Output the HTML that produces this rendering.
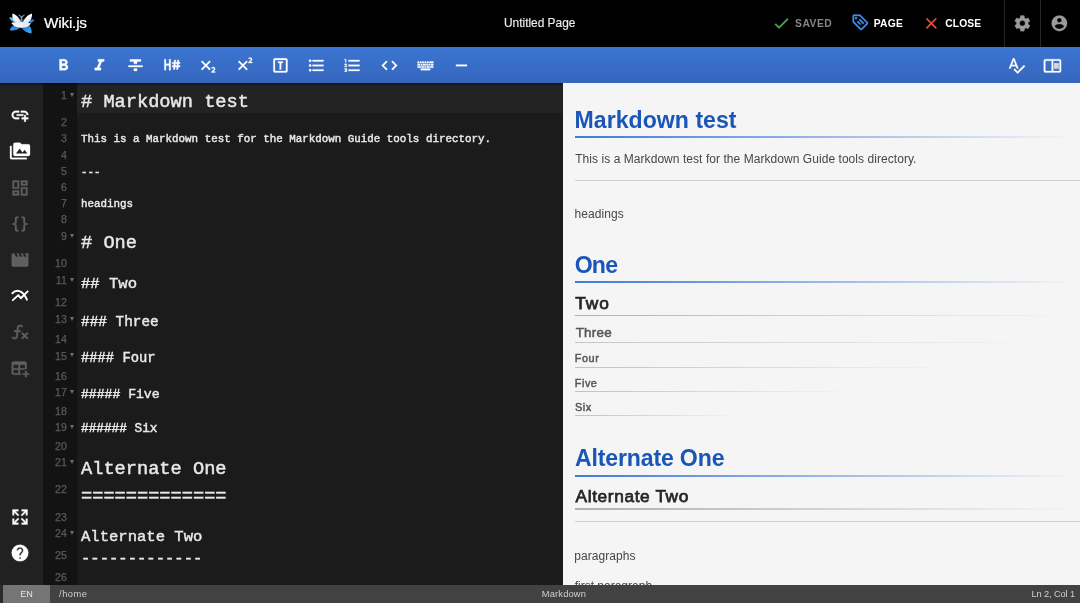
<!DOCTYPE html>
<html lang="en"><head><meta charset="utf-8"><title>Untitled Page - Wiki.js</title>
<style>
*{box-sizing:border-box;margin:0;padding:0}
html,body{width:1080px;height:603px;overflow:hidden;background:#000}
body{position:relative;font-family:"Liberation Sans",sans-serif;-webkit-font-smoothing:antialiased}
.abs{position:absolute}
.ic{position:absolute;display:block;overflow:visible}
.t{position:absolute;white-space:pre;line-height:1}
#wrap{position:absolute;left:0;top:0;width:1080px;height:603px;will-change:transform}
#topbar{left:0;top:0;width:1080px;height:47px;background:#000}
#toolbar{left:0;top:47px;width:1080px;height:36.4px;background:linear-gradient(to bottom,#3b75d1 0%,#3566be 100%)}
#sidebar{left:0;top:83.4px;width:43px;height:501.2px;background:#212121}
#gutter{left:43px;top:83.4px;width:34px;height:501.2px;background:#131313}
#editor{left:77px;top:83.4px;width:485.5px;height:501.2px;background:#1b1b1b}
#active{left:77px;top:83.4px;width:485.5px;height:29.7px;background:#232323}
#preview{left:562.5px;top:83.4px;width:517.5px;height:501.2px;background:#f5f5f5;overflow:hidden}
#status{left:0;top:584.6px;width:1080px;height:18.4px;background:#424242}
#shadow{left:0;top:83.4px;width:562.5px;height:3px;background:linear-gradient(to bottom,rgba(0,0,0,.45),rgba(0,0,0,0))}
.ln{position:absolute;left:43px;width:23.8px;text-align:right;font-family:"Liberation Sans",sans-serif;font-size:10.6px;color:#5a5a5a;line-height:16.2px;height:16.2px;-webkit-text-stroke:.25px #5a5a5a}
.fold{position:absolute;left:70.15px;width:0;height:0;border-left:2.9px solid transparent;border-right:2.9px solid transparent;border-top:4.9px solid #6e6e6e}
.cl{position:absolute;left:81px;white-space:pre;font-family:"Liberation Mono",monospace;color:#e8e8e8;line-height:1;-webkit-text-stroke:.45px #e8e8e8}
.pv{position:absolute;left:12.2px;white-space:pre;line-height:1}
.ul{position:absolute;left:12.5px;height:1.5px}
</style></head><body><div id="wrap">

<div class="abs" id="topbar"></div>
<div class="abs" id="toolbar"></div>
<div class="abs" id="sidebar"></div>
<div class="abs" id="gutter"></div>
<div class="abs" id="editor"></div>
<div class="abs" id="active"></div>
<div class="abs" id="status"></div>
<svg class="ic" style="left:8.5px;top:12.5px;width:26px;height:21px" viewBox="0 0 26 21">
<defs>
<linearGradient id="lgw" x1="0" y1="0" x2="0" y2="1"><stop offset="0" stop-color="#ffffff"/><stop offset="1" stop-color="#dfe4ee"/></linearGradient>
<linearGradient id="lgl" x1="1" y1="0" x2="0" y2="1"><stop offset="0" stop-color="#1f66c8"/><stop offset="1" stop-color="#3f9ff0"/></linearGradient>
<linearGradient id="lgr" x1="0" y1="0" x2="1" y2="1"><stop offset="0" stop-color="#1f66c8"/><stop offset="1" stop-color="#49aef4"/></linearGradient>
</defs>
<path d="M0.1,4.5 C2,3.7 4.4,4.5 5.8,6.2 L5.4,9.2 C3,8.4 1,6.8 0.1,4.5Z" fill="#46bdf5"/>
<path d="M25.5,6.8 C24,6.1 22.2,6.5 21,7.6 L21,10.4 C23,9.9 24.6,8.6 25.5,6.8Z" fill="#2f86de"/>
<path d="M0.7,17.3 C1.6,14.6 3.4,12.8 4.8,12.4 C7,13.4 9.6,14.1 11.8,14.2 C9.6,16.6 5,18.1 0.7,17.3Z" fill="url(#lgl)"/>
<path d="M22.5,20.4 C23,17 21.9,13.9 20.4,12.4 C18,13.7 15,14.5 12.4,14.6 C14.4,17.8 18.4,20.2 22.5,20.4Z" fill="url(#lgr)"/>
<path d="M10.2,5.4 L11.4,8.8 L13.8,8.8 L14.9,5.6 L12.5,7.2Z" fill="#1450a8"/>
<path d="M3.4,0.5 C7.6,1.6 11.8,6 12.9,12.8 C7.4,12.2 2.6,8 3.4,0.5Z" fill="url(#lgw)"/>
<path d="M23,0.5 C18.6,1.8 13.8,6.6 12.5,13 C18.2,12.2 23.6,7.6 23,0.5Z" fill="url(#lgw)"/>
<path d="M2.3,9.7 C5,8.3 10.2,9.4 12.8,14.6 C8.4,15 3.9,13.1 2.3,9.7Z" fill="#eef1f7"/>
<path d="M21.9,10.2 C19,8.9 14.6,9.9 12.2,14.8 C16.5,15.1 20.5,13.3 21.9,10.2Z" fill="#e6eaf2"/>
<ellipse cx="12.6" cy="11.6" rx="1.6" ry="3.2" fill="#eef1f7"/>
<path d="M10.1,2.1 L12.5,4.2 L15.1,2.1" fill="none" stroke="#8e949b" stroke-width="1.1" stroke-linecap="round" stroke-linejoin="round"/>
<path d="M12.5,4.2 L12.5,7.4" stroke="#8e949b" stroke-width="1.5" stroke-linecap="round"/>
</svg>
<div class="t" id="brand" style="left:44.0px;top:14.7px;font-size:15.3px;letter-spacing:-.2px;color:#fff;-webkit-text-stroke:.2px #fff">Wiki.js</div>
<div class="t" id="title" style="left:504.0px;top:18.2px;font-size:11.9px;color:#ececec;-webkit-text-stroke:.15px #ececec">Untitled Page</div>
<svg class="ic" style="left:772.05px;top:13.85px;width:18.70px;height:18.70px" viewBox="0 0 24 24"><path d="M21,7L9,19L3.5,13.5L4.91,12.09L9,16.17L19.59,5.59L21,7Z" fill="#4ea94f" stroke="#4ea94f" stroke-width=".35" stroke-linejoin="round"/></svg>
<div class="t tb" id="saved" style="left:795.0px;top:19.2px;font-size:10.3px;font-weight:bold;letter-spacing:.52px;color:#858585">SAVED</div>
<svg class="ic" style="left:850.65px;top:13.45px;width:18.70px;height:18.70px" viewBox="0 0 24 24"><path d="M21.4,11.6L12.4,2.6C12,2.2 11.5,2 11,2H4C2.9,2 2,2.9 2,4V11C2,11.5 2.2,12 2.6,12.4L11.6,21.4C12,21.8 12.5,22 13,22C13.5,22 14,21.8 14.4,21.4L21.4,14.4C21.8,14 22,13.5 22,13C22,12.5 21.8,12 21.4,11.6M13,20L4,11V4H11L20,13M6.5,5A1.5,1.5 0 0,1 8,6.5A1.5,1.5 0 0,1 6.5,8A1.5,1.5 0 0,1 5,6.5A1.5,1.5 0 0,1 6.5,5M10.1,8.9L11.5,7.5L17,13L15.6,14.4L10.1,8.9M7.6,11.4L9,10L13,14L11.6,15.4L7.6,11.4Z" fill="#3d8df0" stroke="#3d8df0" stroke-width=".35" stroke-linejoin="round"/></svg>
<div class="t tb" id="page" style="left:873.7px;top:19.2px;font-size:10.3px;font-weight:bold;letter-spacing:.24px;color:#fff">PAGE</div>
<svg class="ic" style="left:922.05px;top:13.85px;width:18.70px;height:18.70px" viewBox="0 0 24 24"><path d="M19,6.41L17.59,5L12,10.59L6.41,5L5,6.41L10.59,12L5,17.59L6.41,19L12,13.41L17.59,19L19,17.59L13.41,12L19,6.41Z" fill="#e8493a" stroke="#e8493a" stroke-width=".35" stroke-linejoin="round"/></svg>
<div class="t tb" id="close" style="left:945.3px;top:19.2px;font-size:10.3px;font-weight:bold;letter-spacing:.1px;color:#fff">CLOSE</div>
<div class="abs" style="left:1003.6px;top:0;width:1px;height:47px;background:#262626"></div>
<div class="abs" style="left:1039.9px;top:0;width:1px;height:47px;background:#262626"></div>
<svg class="ic" style="left:1012.55px;top:13.55px;width:18.70px;height:18.70px" viewBox="0 0 24 24"><path d="M12,15.5A3.5,3.5 0 0,1 8.5,12A3.5,3.5 0 0,1 12,8.5A3.5,3.5 0 0,1 15.5,12A3.5,3.5 0 0,1 12,15.5M19.43,12.97C19.47,12.65 19.5,12.33 19.5,12C19.5,11.67 19.47,11.34 19.43,11L21.54,9.37C21.73,9.22 21.78,8.95 21.66,8.73L19.66,5.27C19.54,5.05 19.27,4.96 19.05,5.05L16.56,6.05C16.04,5.66 15.5,5.32 14.87,5.07L14.5,2.42C14.46,2.18 14.25,2 14,2H10C9.75,2 9.54,2.18 9.5,2.42L9.13,5.07C8.5,5.32 7.96,5.66 7.44,6.05L4.95,5.05C4.73,4.96 4.46,5.05 4.34,5.27L2.34,8.73C2.21,8.95 2.27,9.22 2.46,9.37L4.57,11C4.53,11.34 4.5,11.67 4.5,12C4.5,12.33 4.53,12.65 4.57,12.97L2.46,14.63C2.27,14.78 2.21,15.05 2.34,15.27L4.34,18.73C4.46,18.95 4.73,19.03 4.95,18.95L7.44,17.94C7.96,18.34 8.5,18.68 9.13,18.93L9.5,21.58C9.54,21.82 9.75,22 10,22H14C14.25,22 14.46,21.82 14.5,21.58L14.87,18.93C15.5,18.67 16.04,18.34 16.56,17.94L19.05,18.95C19.27,19.03 19.54,18.95 19.66,18.73L21.66,15.27C21.78,15.05 21.73,14.78 21.54,14.63L19.43,12.97Z" fill="#9a9a9a" stroke="#9a9a9a" stroke-width=".35" stroke-linejoin="round"/></svg>
<svg class="ic" style="left:1049.55px;top:13.65px;width:18.70px;height:18.70px" viewBox="0 0 24 24"><path d="M12,19.2C9.5,19.2 7.29,17.92 6,16C6.03,14 10,12.9 12,12.9C14,12.9 17.97,14 18,16C16.71,17.92 14.5,19.2 12,19.2M12,5A3,3 0 0,1 15,8A3,3 0 0,1 12,11A3,3 0 0,1 9,8A3,3 0 0,1 12,5M12,2A10,10 0 0,0 2,12A10,10 0 0,0 12,22A10,10 0 0,0 22,12C22,6.47 17.5,2 12,2Z" fill="#9a9a9a" stroke="#9a9a9a" stroke-width=".35" stroke-linejoin="round"/></svg>
<svg class="ic" style="left:53.55px;top:55.65px;width:18.90px;height:18.90px" viewBox="0 0 24 24"><path d="M13.5,15.5H10V12.5H13.5A1.5,1.5 0 0,1 15,14A1.5,1.5 0 0,1 13.5,15.5M10,6.5H13A1.5,1.5 0 0,1 14.5,8A1.5,1.5 0 0,1 13,9.5H10M15.6,10.79C16.57,10.11 17.25,9 17.25,8C17.25,5.74 15.5,4 13.25,4H7V18H14.04C16.14,18 17.75,16.3 17.75,14.21C17.75,12.69 16.89,11.39 15.6,10.79Z" fill="#fff" stroke="#fff" stroke-width=".35" stroke-linejoin="round"/></svg>
<svg class="ic" style="left:89.78px;top:55.65px;width:18.90px;height:18.90px" viewBox="0 0 24 24"><path d="M10,4V7H12.21L8.79,15H6V18H14V15H11.79L15.21,7H18V4H10Z" fill="#fff" stroke="#fff" stroke-width=".35" stroke-linejoin="round"/></svg>
<svg class="ic" style="left:126.01px;top:55.65px;width:18.90px;height:18.90px" viewBox="0 0 24 24"><path d="M3,14H21V12H3M5,4V7H10V10H14V7H19V4M10,19H14V16H10V19Z" fill="#fff" stroke="#fff" stroke-width=".35" stroke-linejoin="round"/></svg>
<svg class="ic" style="left:162.24px;top:55.65px;width:18.90px;height:18.90px" viewBox="0 0 24 24"><path d="M3,4H5V10H9V4H11V18H9V12H5V18H3V4M13,8H15.31L15.63,5H17.63L17.31,8H19.31L19.63,5H21.63L21.31,8H23V10H21.1L20.9,12H23V14H20.69L20.37,17H18.37L18.69,14H16.69L16.37,17H14.37L14.69,14H13V12H14.9L15.1,10H13V8M17.1,10L16.9,12H18.9L19.1,10H17.1Z" fill="#fff" stroke="#fff" stroke-width=".35" stroke-linejoin="round"/></svg>
<svg class="ic" style="left:198.47px;top:55.65px;width:18.90px;height:18.90px" viewBox="0 0 24 24"><path d="M16,7.41L11.41,12L16,16.59L14.59,18L10,13.41L5.41,18L4,16.59L8.59,12L4,7.41L5.41,6L10,10.59L14.59,6L16,7.41M21.85,21.03H16.97V20.03L17.86,19.23C18.62,18.58 19.18,18.04 19.56,17.6C19.93,17.16 20.12,16.75 20.13,16.36C20.14,16.08 20.05,15.85 19.86,15.66C19.68,15.5 19.39,15.38 19,15.38C18.69,15.38 18.42,15.44 18.16,15.56L17.5,15.94L17.05,14.77C17.32,14.56 17.64,14.38 18.03,14.24C18.42,14.1 18.85,14 19.32,14C20.1,14.04 20.7,14.25 21.1,14.66C21.5,15.07 21.72,15.59 21.72,16.23C21.71,16.79 21.53,17.31 21.18,17.78C20.84,18.25 20.42,18.7 19.91,19.14L19.27,19.66V19.68H21.85V21.03Z" fill="#fff" stroke="#fff" stroke-width=".35" stroke-linejoin="round"/></svg>
<svg class="ic" style="left:234.70px;top:55.65px;width:18.90px;height:18.90px" viewBox="0 0 24 24"><path d="M16,7.41L11.41,12L16,16.59L14.59,18L10,13.41L5.41,18L4,16.59L8.59,12L4,7.41L5.41,6L10,10.59L14.59,6L16,7.41M21.85,9H16.97V8L17.86,7.18C18.62,6.54 19.18,6 19.56,5.55C19.93,5.11 20.12,4.7 20.13,4.32C20.14,4.04 20.05,3.8 19.86,3.62C19.68,3.43 19.39,3.34 19,3.33C18.69,3.34 18.42,3.4 18.16,3.5L17.5,3.89L17.05,2.72C17.32,2.5 17.64,2.33 18.03,2.19C18.42,2.05 18.85,2 19.32,2C20.1,2 20.7,2.2 21.1,2.61C21.5,3 21.72,3.54 21.72,4.18C21.71,4.74 21.53,5.26 21.18,5.73C20.84,6.21 20.42,6.66 19.91,7.09L19.27,7.61V7.63H21.85V9Z" fill="#fff" stroke="#fff" stroke-width=".35" stroke-linejoin="round"/></svg>
<svg class="ic" style="left:270.93px;top:55.65px;width:18.90px;height:18.90px" viewBox="0 0 24 24"><path d="M9,7H15V9H13V17H11V9H9V7M5,3H19A2,2 0 0,1 21,5V19A2,2 0 0,1 19,21H5A2,2 0 0,1 3,19V5A2,2 0 0,1 5,3M5,5V19H19V5H5Z" fill="#fff" stroke="#fff" stroke-width=".35" stroke-linejoin="round"/></svg>
<svg class="ic" style="left:307.16px;top:55.65px;width:18.90px;height:18.90px" viewBox="0 0 24 24"><path d="M7,5H21V7H7V5M7,13V11H21V13H7M4,4.5A1.5,1.5 0 0,1 5.5,6A1.5,1.5 0 0,1 4,7.5A1.5,1.5 0 0,1 2.5,6A1.5,1.5 0 0,1 4,4.5M4,10.5A1.5,1.5 0 0,1 5.5,12A1.5,1.5 0 0,1 4,13.5A1.5,1.5 0 0,1 2.5,12A1.5,1.5 0 0,1 4,10.5M7,19V17H21V19H7M4,16.5A1.5,1.5 0 0,1 5.5,18A1.5,1.5 0 0,1 4,19.5A1.5,1.5 0 0,1 2.5,18A1.5,1.5 0 0,1 4,16.5Z" fill="#fff" stroke="#fff" stroke-width=".35" stroke-linejoin="round"/></svg>
<svg class="ic" style="left:343.39px;top:55.65px;width:18.90px;height:18.90px" viewBox="0 0 24 24"><path d="M7,13V11H21V13H7M7,19V17H21V19H7M7,7V5H21V7H7M3,8V5H2V4H4V8H3M2,17V16H5V20H2V19H4V18.5H3V17.5H4V17H2M4.25,10A0.75,0.75 0 0,1 5,10.75C5,10.95 4.92,11.14 4.79,11.27L3.12,13H5V14H2V13.08L4,11H2V10H4.25Z" fill="#fff" stroke="#fff" stroke-width=".35" stroke-linejoin="round"/></svg>
<svg class="ic" style="left:379.62px;top:55.65px;width:18.90px;height:18.90px" viewBox="0 0 24 24"><path d="M14.6,16.6L19.2,12L14.6,7.4L16,6L22,12L16,18L14.6,16.6M9.4,16.6L4.8,12L9.4,7.4L8,6L2,12L8,18L9.4,16.6Z" fill="#fff" stroke="#fff" stroke-width=".35" stroke-linejoin="round"/></svg>
<svg class="ic" style="left:415.85px;top:55.65px;width:18.90px;height:18.90px" viewBox="0 0 24 24"><path d="M6,16H18V18H6V16M6,13V15H2V13H6M7,15V13H10V15H7M11,15V13H13V15H11M14,15V13H17V15H14M18,15V13H22V15H18M2,10H5V12H2V10M19,12V10H22V12H19M18,12H16V10H18V12M8,12H6V10H8V12M12,12H9V10H12V12M15,12H13V10H15V12M2,9V7H4V9H2M5,9V7H7V9H5M8,9V7H10V9H8M11,9V7H13V9H11M14,9V7H16V9H14M17,9V7H22V9H17Z" fill="#fff" stroke="#fff" stroke-width=".35" stroke-linejoin="round"/></svg>
<svg class="ic" style="left:452.08px;top:55.65px;width:18.90px;height:18.90px" viewBox="0 0 24 24"><path d="M19,13H5V11H19V13Z" fill="#fff" stroke="#fff" stroke-width=".35" stroke-linejoin="round"/></svg>
<svg class="ic" style="left:1007.05px;top:56.05px;width:18.90px;height:18.90px" viewBox="0 0 24 24"><path d="M21.59,11.59L13.5,19.68L9.83,16L8.42,17.41L13.5,22.5L23,13M6.43,11L8.5,5.5L10.57,11M12.45,16H14.54L9.43,3H7.57L2.46,16H4.55L5.67,13H11.31L12.45,16Z" fill="#fff" stroke="#fff" stroke-width=".35" stroke-linejoin="round"/></svg>
<svg class="ic" style="left:1043.20px;top:55.75px;width:18.90px;height:18.90px" viewBox="0 0 24 24"><path d="M21,4H3A2,2 0 0,0 1,6V19A2,2 0 0,0 3,21H21A2,2 0 0,0 23,19V6A2,2 0 0,0 21,4M3,19V6H11V19H3M21,19H13V6H21V19M14,9.5H20V11H14V9.5M14,12H20V13.5H14V12M14,14.5H20V16H14V14.5Z" fill="#fff" stroke="#fff" stroke-width=".35" stroke-linejoin="round"/></svg>
<svg class="ic" style="left:10.10px;top:105.10px;width:20.00px;height:20.00px" viewBox="0 0 24 24"><path d="M7,7H11V9H7A3,3 0 0,0 4,12A3,3 0 0,0 7,15H11V17H7A5,5 0 0,1 2,12A5,5 0 0,1 7,7M17,7A5,5 0 0,1 22,12H20A3,3 0 0,0 17,9H13V7H17M8,11H16V13H8V11M17,12H19V15H22V17H19V20H17V17H14V15H17V12Z" fill="#fff" stroke="#fff" stroke-width=".35" stroke-linejoin="round"/></svg>
<svg class="ic" style="left:10.10px;top:141.30px;width:20.00px;height:20.00px" viewBox="0 0 24 24"><path d="M7,15L11.5,9L15,13.5L17.5,10.5L21,15M22,4H14L12,2H6A2,2 0 0,0 4,4V16A2,2 0 0,0 6,18H22A2,2 0 0,0 24,16V6A2,2 0 0,0 22,4M2,6H0V11H0V20A2,2 0 0,0 2,22H20V20H2V6Z" fill="#fff" stroke="#fff" stroke-width=".35" stroke-linejoin="round"/></svg>
<svg class="ic" style="left:10.10px;top:177.50px;width:20.00px;height:20.00px" viewBox="0 0 24 24"><path d="M19,5V7H15V5H19M9,5V11H5V5H9M19,13V19H15V13H19M9,17V19H5V17H9M21,3H13V9H21V3M11,3H3V13H11V3M21,11H13V21H21V11M11,15H3V21H11V15Z" fill="#5f5f5f" stroke="#5f5f5f" stroke-width=".35" stroke-linejoin="round"/></svg>
<svg class="ic" style="left:10.10px;top:213.70px;width:20.00px;height:20.00px" viewBox="0 0 24 24"><path d="M8,3A2,2 0 0,0 6,5V9A2,2 0 0,1 4,11H3V13H4A2,2 0 0,1 6,15V19A2,2 0 0,0 8,21H10V19H8V14A2,2 0 0,0 6,12A2,2 0 0,0 8,10V5H10V3M16,3A2,2 0 0,1 18,5V9A2,2 0 0,0 20,11H21V13H20A2,2 0 0,0 18,15V19A2,2 0 0,1 16,21H14V19H16V14A2,2 0 0,1 18,12A2,2 0 0,1 16,10V5H14V3H16Z" fill="#5f5f5f" stroke="#5f5f5f" stroke-width=".35" stroke-linejoin="round"/></svg>
<svg class="ic" style="left:10.10px;top:249.90px;width:20.00px;height:20.00px" viewBox="0 0 24 24"><path d="M18,4L20,8H17L15,4H13L15,8H12L10,4H8L10,8H7L5,4H4A2,2 0 0,0 2,6V18A2,2 0 0,0 4,20H20A2,2 0 0,0 22,18V4H18Z" fill="#5f5f5f" stroke="#5f5f5f" stroke-width=".35" stroke-linejoin="round"/></svg>
<svg class="ic" style="left:10.10px;top:286.10px;width:20.00px;height:20.00px" viewBox="0 0 24 24"><path d="M2.8,8.7 C7,4.4 15,3.4 20.3,16.4" fill="none" stroke="#fff" stroke-width="2.3" stroke-linecap="round"/><path d="M3.4,17 L10,10.9 L13,14.7 L21.2,6.5" fill="none" stroke="#fff" stroke-width="2.3" stroke-linecap="round" stroke-linejoin="round"/></svg>
<svg class="ic" style="left:10.10px;top:322.30px;width:20.00px;height:20.00px" viewBox="0 0 24 24"><path d="M12.42,5.29C11.32,5.19 10.35,6 10.25,7.11L10,10H12.82V12H9.82L9.38,17.07C9.18,19.27 7.24,20.9 5.04,20.7C3.79,20.59 2.66,19.9 2,18.83L3.5,17.33C3.83,18.38 4.96,18.97 6,18.63C6.78,18.39 7.33,17.7 7.4,16.89L7.82,12H4.82V10H8L8.27,6.93C8.46,4.73 10.39,3.1 12.6,3.28C13.86,3.39 15,4.09 15.66,5.17L14.16,6.67C13.91,5.9 13.23,5.36 12.42,5.29M22,13.65L20.59,12.24L17.76,15.07L14.93,12.24L13.5,13.65L16.35,16.5L13.5,19.31L14.93,20.72L17.76,17.89L20.59,20.72L22,19.31L19.17,16.5L22,13.65Z" fill="#5f5f5f" stroke="#5f5f5f" stroke-width=".35" stroke-linejoin="round"/></svg>
<svg class="ic" style="left:10.10px;top:358.50px;width:20.00px;height:20.00px" viewBox="0 0 24 24"><path d="M18,14H20V17H23V19H20V22H18V19H15V17H18V14M4,3H18A2,2 0 0,1 20,5V12.08C18.45,11.82 16.92,12.18 15.68,13H12V17H13.08C12.97,17.68 12.97,18.35 13.08,19H4A2,2 0 0,1 2,17V5A2,2 0 0,1 4,3M4,7V11H10V7H4M12,7V11H18V7H12M4,13V17H10V13H4Z" fill="#5f5f5f" stroke="#5f5f5f" stroke-width=".35" stroke-linejoin="round"/></svg>
<svg class="ic" style="left:10.10px;top:507.10px;width:20.00px;height:20.00px" viewBox="0 0 24 24"><path d="M9.5,13.09L10.91,14.5L6.41,19H10V21H3V14H5V17.59L9.5,13.09M10.91,9.5L9.5,10.91L5,6.41V10H3V3H10V5H6.41L10.91,9.5M14.5,13.09L19,17.59V14H21V21H14V19H17.59L13.09,14.5L14.5,13.09M13.09,9.5L17.59,5H14V3H21V10H19V6.41L14.5,10.91L13.09,9.5Z" fill="#fff" stroke="#fff" stroke-width=".35" stroke-linejoin="round"/></svg>
<svg class="ic" style="left:10.00px;top:543.20px;width:20.00px;height:20.00px" viewBox="0 0 24 24"><path d="M15.07,11.25L14.17,12.17C13.45,12.89 13,13.5 13,15H11V14.5C11,13.39 11.45,12.39 12.17,11.67L13.41,10.41C13.78,10.05 14,9.55 14,9C14,7.89 13.1,7 12,7A2,2 0 0,0 10,9H8A4,4 0 0,1 12,5A4,4 0 0,1 16,9C16,9.88 15.64,10.67 15.07,11.25M13,19H11V17H13M12,2A10,10 0 0,0 2,12A10,10 0 0,0 12,22A10,10 0 0,0 22,12C22,6.47 17.5,2 12,2Z" fill="#fff" stroke="#fff" stroke-width=".35" stroke-linejoin="round"/></svg>
<div class="abs" id="shadow"></div>
<div class="ln" style="top:87.00px">1</div>
<div class="fold" style="top:92.90px"></div>
<div class="cl" id="cl1" style="top:93.29px;font-size:18.67px"># Markdown test</div>
<div class="ln" style="top:114.30px">2</div>
<div class="ln" style="top:130.30px">3</div>
<div class="cl" id="cl3" style="top:134.18px;font-size:10.85px">This is a Markdown test for the Markdown Guide tools directory.</div>
<div class="ln" style="top:146.50px">4</div>
<div class="ln" style="top:162.70px">5</div>
<div class="cl" id="cl5" style="top:166.58px;font-size:10.85px">---</div>
<div class="ln" style="top:178.90px">6</div>
<div class="ln" style="top:195.10px">7</div>
<div class="cl" id="cl7" style="top:198.98px;font-size:10.85px">headings</div>
<div class="ln" style="top:211.40px">8</div>
<div class="ln" style="top:228.20px">9</div>
<div class="fold" style="top:234.10px"></div>
<div class="cl" id="cl9" style="top:234.19px;font-size:18.67px"># One</div>
<div class="ln" style="top:255.30px">10</div>
<div class="ln" style="top:272.00px">11</div>
<div class="fold" style="top:277.90px"></div>
<div class="cl" id="cl11" style="top:277.48px;font-size:15.55px">## Two</div>
<div class="ln" style="top:294.40px">12</div>
<div class="ln" style="top:310.60px">13</div>
<div class="fold" style="top:316.50px"></div>
<div class="cl" id="cl13" style="top:314.96px;font-size:14.40px">### Three</div>
<div class="ln" style="top:331.20px">14</div>
<div class="ln" style="top:347.50px">15</div>
<div class="fold" style="top:353.40px"></div>
<div class="cl" id="cl15" style="top:351.62px;font-size:13.80px">#### Four</div>
<div class="ln" style="top:367.80px">16</div>
<div class="ln" style="top:384.10px">17</div>
<div class="fold" style="top:390.00px"></div>
<div class="cl" id="cl17" style="top:388.16px;font-size:13.10px">##### Five</div>
<div class="ln" style="top:403.20px">18</div>
<div class="ln" style="top:419.40px">19</div>
<div class="fold" style="top:425.30px"></div>
<div class="cl" id="cl19" style="top:423.33px;font-size:12.75px">###### Six</div>
<div class="ln" style="top:437.50px">20</div>
<div class="ln" style="top:454.10px">21</div>
<div class="fold" style="top:460.00px"></div>
<div class="cl" id="cl21" style="top:459.89px;font-size:18.67px">Alternate One</div>
<div class="ln" style="top:481.10px">22</div>
<div class="cl" id="cl22" style="top:486.89px;font-size:18.67px">=============</div>
<div class="ln" style="top:508.50px">23</div>
<div class="ln" style="top:524.70px">24</div>
<div class="fold" style="top:530.60px"></div>
<div class="cl" id="cl24" style="top:530.38px;font-size:15.55px">Alternate Two</div>
<div class="ln" style="top:547.00px">25</div>
<div class="cl" id="cl25" style="top:551.68px;font-size:15.55px">-------------</div>
<div class="ln" style="top:569.40px">26</div>
<div class="abs" id="preview">
<div class="pv" id="h1a" style="left:12.10px;top:25.95px;font-size:23.10px;color:#1a55b8;font-weight:bold;letter-spacing:0.023px">Markdown test</div>
<div class="ul" style="top:52.60px;width:505.0px;height:1.80px;background:linear-gradient(to right,rgba(64,122,218,1.00) 0px,rgba(64,122,218,0) 500px)"></div>
<div class="pv" id="p1" style="left:12.74px;top:69.64px;font-size:12.00px;color:#464646;font-weight:normal;letter-spacing:0.053px">This is a Markdown test for the Markdown Guide tools directory.</div>
<div class="ul" style="top:96.50px;width:520px;height:1px;background:#cdcdcd"></div>
<div class="pv" id="p2" style="left:12.11px;top:124.14px;font-size:12.00px;color:#464646;font-weight:normal;letter-spacing:0.077px">headings</div>
<div class="pv" id="h1b" style="left:12.28px;top:170.35px;font-size:23.10px;color:#1a55b8;font-weight:bold;letter-spacing:-0.855px">One</div>
<div class="ul" style="top:197.90px;width:505.0px;height:1.80px;background:linear-gradient(to right,rgba(64,122,218,1.00) 0px,rgba(64,122,218,0) 500px)"></div>
<div class="pv" id="h2a" style="left:12.87px;top:211.76px;font-size:17.30px;color:#262626;font-weight:normal;letter-spacing:0.891px;-webkit-text-stroke:0.75px #262626">Two</div>
<div class="ul" style="top:231.30px;width:505.0px;height:1.60px;background:linear-gradient(to right,rgba(150,150,150,0.72) 0px,rgba(150,150,150,0) 505px)"></div>
<div class="pv" id="h3a" style="left:13.15px;top:242.56px;font-size:13.40px;color:#555555;font-weight:normal;letter-spacing:0.291px;-webkit-text-stroke:0.50px #555555">Three</div>
<div class="ul" style="top:259.10px;width:505.0px;height:1.00px;background:linear-gradient(to right,rgba(150,150,150,0.50) 0px,rgba(150,150,150,0) 470px)"></div>
<div class="pv" id="h4a" style="left:12.34px;top:269.57px;font-size:10.90px;color:#555555;font-weight:normal;letter-spacing:0.520px;-webkit-text-stroke:0.45px #555555">Four</div>
<div class="ul" style="top:283.50px;width:505.0px;height:1.00px;background:linear-gradient(to right,rgba(150,150,150,0.55) 0px,rgba(150,150,150,0) 380px)"></div>
<div class="pv" id="h5a" style="left:12.34px;top:294.37px;font-size:10.90px;color:#555555;font-weight:normal;letter-spacing:0.490px;-webkit-text-stroke:0.45px #555555">Five</div>
<div class="ul" style="top:307.70px;width:505.0px;height:1.00px;background:linear-gradient(to right,rgba(150,150,150,0.55) 0px,rgba(150,150,150,0) 280px)"></div>
<div class="pv" id="h6a" style="left:12.48px;top:318.47px;font-size:10.90px;color:#555555;font-weight:normal;letter-spacing:0.553px;-webkit-text-stroke:0.45px #555555">Six</div>
<div class="ul" style="top:331.80px;width:505.0px;height:1.00px;background:linear-gradient(to right,rgba(150,150,150,0.55) 0px,rgba(150,150,150,0) 165px)"></div>
<div class="pv" id="h1c" style="left:12.40px;top:363.35px;font-size:23.10px;color:#1a55b8;font-weight:bold;letter-spacing:-0.154px">Alternate One</div>
<div class="ul" style="top:391.40px;width:505.0px;height:1.80px;background:linear-gradient(to right,rgba(64,122,218,1.00) 0px,rgba(64,122,218,0) 500px)"></div>
<div class="pv" id="h2b" style="left:13.09px;top:404.16px;font-size:17.30px;color:#262626;font-weight:normal;letter-spacing:0.617px;-webkit-text-stroke:0.75px #262626">Alternate Two</div>
<div class="ul" style="top:425.00px;width:505.0px;height:1.60px;background:linear-gradient(to right,rgba(150,150,150,0.72) 0px,rgba(150,150,150,0) 505px)"></div>
<div class="ul" style="top:438.00px;width:520px;height:1px;background:#cdcdcd"></div>
<div class="pv" id="p3" style="left:11.75px;top:466.14px;font-size:12.00px;color:#464646;font-weight:normal;letter-spacing:0.052px">paragraphs</div>
<div class="pv" id="p4" style="left:12.20px;top:496.14px;font-size:12.00px;color:#464646;font-weight:normal;letter-spacing:0.000px">first paragraph</div>
</div>
<div class="abs" style="left:0;top:584.6px;width:2.8px;height:18.4px;background:#2b2b2b"></div>
<div class="abs" style="left:2.8px;top:584.6px;width:47.6px;height:18.4px;background:#757575"></div>
<div class="t" id="s_en" style="left:20.30px;top:589.80px;font-size:9.10px;letter-spacing:0.00px;color:#e4e4e4">EN</div>
<div class="t" id="s_home" style="left:59.10px;top:589.63px;font-size:9.30px;letter-spacing:0.50px;color:#d0d0d0">/home</div>
<div class="t" id="s_md" style="left:541.80px;top:589.63px;font-size:9.30px;letter-spacing:0.17px;color:#d0d0d0">Markdown</div>
<div class="t" id="s_ln" style="left:1031.60px;top:589.63px;font-size:9.30px;letter-spacing:-0.15px;color:#d0d0d0">Ln 2, Col 1</div>
</div></body></html>
